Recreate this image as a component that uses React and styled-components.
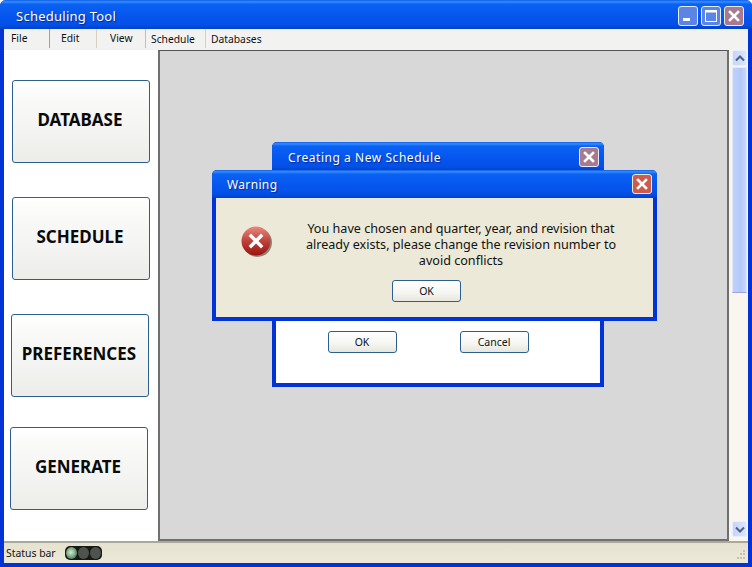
import React from "react";
import styled, { createGlobalStyle } from "styled-components";

const GlobalStyle = createGlobalStyle`
	html, body {
		margin: 0;
		padding: 0;
		background: #fff;
	}
	body {
		font-family: "Noto Sans", "Liberation Sans", sans-serif;
		color: #111;
	}
`;

const titleGradient = `linear-gradient(180deg, #0a5de8 0%, #3a8cfa 6%, #0a62f2 14%, #0556ee 55%, #0350e6 85%, #0240c8 100%)`;

const Window = styled.div`
	position: relative;
	width: 752px;
	height: 567px;
	display: flex;
	flex-direction: column;
	overflow: hidden;
	background: #0233d6;
	border-radius: 6px 6px 0 0;
`;

const TitleBar = styled.div`
	height: 29px;
	flex: none;
	display: flex;
	align-items: center;
	justify-content: space-between;
	padding: 0 8px 0 16px;
	background: ${titleGradient};
`;

const TitleText = styled.span`
	color: #fff;
	font-size: ${(p) => p.$size || 13}px;
	letter-spacing: ${(p) => p.$spacing || 0.25}px;
	padding-top: ${(p) => p.$top || 0}px;
	text-shadow: 1px 1px 1px #0a2a90;
`;

const WindowButtons = styled.div`
	display: flex;
	gap: 3px;
	margin-top: 2px;
`;

const CaptionButton = styled.div`
	width: 20px;
	height: 20px;
	box-sizing: border-box;
	border: 1px solid #e6ecff;
	border-radius: 3px;
	display: flex;
	align-items: center;
	justify-content: center;
	background: ${(p) => (p.$kind === "close" ? p.$bg || "#a87a90" : "#5a84e6")};
	flex: none;
`;

const Body = styled.div`
	flex: 1;
	margin: 0 4px;
	display: flex;
	flex-direction: column;
	min-height: 0;
`;

const MenuBar = styled.div`
	height: 21px;
	flex: none;
	display: flex;
	background: #f2f2f1;
	font-size: 10.3px;
`;

const MenuItem = styled.div`
	width: ${(p) => p.$width}px;
	box-sizing: border-box;
	padding-left: ${(p) => p.$pad}px;
	padding-top: ${(p) => p.$top}px;
	line-height: 14px;
	height: 19px;
	border-right: 1px solid ${(p) => p.$line || "#d8cfc0"};
	&:last-child {
		border-right: none;
	}
`;

const Content = styled.div`
	flex: 1;
	display: flex;
	min-height: 0;
	background: #fff;
`;

const Sidebar = styled.div`
	width: 154px;
	flex: none;
	padding-top: 30px;
	box-sizing: border-box;
	display: flex;
	flex-direction: column;
`;

const BigButton = styled.div`
	width: 138px;
	height: 83px;
	box-sizing: border-box;
	margin-left: ${(p) => p.$left}px;
	margin-bottom: ${(p) => p.$gap}px;
	padding: 0 2px 4px 0;
	border: 1px solid #2c5f8f;
	border-radius: 3px;
	background: linear-gradient(180deg, #fff 0%, #f8f8f6 30%, #f3f3f1 65%, #ecece8 100%);
	display: flex;
	align-items: center;
	justify-content: center;
	font-size: 17px;
	font-weight: 700;
	color: #0a0a0a;
`;

const MainPanel = styled.div`
	width: 571px;
	flex: none;
	box-sizing: border-box;
	background: #d8d8d8;
	border: 2px solid #6f6f6f;
	border-top-color: #555;
	border-top-width: 1px;
`;

const ScrollBar = styled.div`
	flex: 1;
	padding: 0 1px 0 3px;
	display: flex;
	flex-direction: column;
	background: #f8f6ef;
`;

const ScrollButton = styled.div`
	height: 16px;
	flex: none;
	border-radius: 2px;
	background: linear-gradient(90deg, #c5d5fb, #dbe5fd);
	border: 1px solid #e8eefe;
	box-sizing: border-box;
	display: flex;
	align-items: center;
	justify-content: center;
`;

const ScrollThumb = styled.div`
	height: 226px;
	flex: none;
	margin-top: 1px;
	box-sizing: border-box;
	background: linear-gradient(90deg, #c0d2fb, #b3c9fa 60%, #c8d7fc);
	border: 1px solid #dfe7fd;
	border-bottom: 1px solid #9aa6dc;
`;

const ScrollTrack = styled.div`
	flex: 1;
`;

const StatusBar = styled.div`
	height: 22px;
	flex: none;
	box-sizing: border-box;
	border-top: 2px solid #aca899;
	background: linear-gradient(180deg, #e6e2d0, #ece9d8);
	display: flex;
	align-items: center;
	padding-left: 2px;
	font-size: 10.4px;
	position: relative;
`;

const Lights = styled.div`
	margin-left: 9px;
	display: flex;
	gap: 1px;
	padding: 1px;
	background: #161a14;
	border-radius: 5px;
`;

const Light = styled.div`
	width: 11px;
	height: 12px;
	border-radius: 50%;
	background: ${(p) =>
		p.$on
			? "radial-gradient(circle at 45% 45%, #d5ecd8 0%, #6f9e78 55%, #2c4a32 100%)"
			: "#4e534e"};
`;

const Grip = styled.svg`
	position: absolute;
	right: 2px;
	bottom: 2px;
`;

const Bottom = styled.div`
	height: 4px;
	flex: none;
`;

const Dialog = styled.div`
	position: absolute;
	left: ${(p) => p.$x}px;
	top: ${(p) => p.$y}px;
	width: ${(p) => p.$w}px;
	height: ${(p) => p.$h}px;
	display: flex;
	flex-direction: column;
	background: #0233d6;
	border-radius: 5px 5px 0 0;
	overflow: hidden;
`;

const DialogTitle = styled.div`
	height: ${(p) => p.$h}px;
	flex: none;
	display: flex;
	align-items: center;
	justify-content: space-between;
	padding: 0 ${(p) => p.$right}px 0 ${(p) => p.$left}px;
	background: ${titleGradient};
`;

const DialogBody = styled.div`
	flex: 1;
	margin: 0 4px 4px;
	background: ${(p) => p.$bg};
	display: flex;
	flex-direction: column;
	align-items: center;
	min-height: 0;
`;

const ButtonRow = styled.div`
	display: flex;
	gap: 63px;
	margin-top: auto;
	margin-bottom: 30px;
	padding-right: 20px;
`;

const DialogButton = styled.div`
	width: 69px;
	height: 22px;
	box-sizing: border-box;
	border: 1px solid #2c5f8f;
	border-radius: 3px;
	background: linear-gradient(180deg, #fff 0%, #f5f5f1 60%, #e6e6de 100%);
	display: flex;
	align-items: center;
	justify-content: center;
	font-size: 10.5px;
	color: #111;
`;

const WarningRow = styled.div`
	width: 100%;
	display: flex;
	padding: 23px 0 0 25px;
	box-sizing: border-box;
`;

const WarningIcon = styled.svg`
	flex: none;
	margin-top: 5px;
`;

const Message = styled.div`
	width: 330px;
	margin-left: 23px;
	text-align: center;
	font-size: 12.6px;
	line-height: 16px;
	color: #111;
`;

const OkWrap = styled.div`
	margin-top: 11px;
	margin-right: 16px;
`;

const CloseIcon = () => (
	<svg width="12" height="12" viewBox="0 0 12 12">
		<path d="M2 2 L10 10 M10 2 L2 10" stroke="#fff" strokeWidth="2.6" strokeLinecap="square" />
	</svg>
);

const App = () => (
	<>
		<GlobalStyle />
		<Window>
			<TitleBar>
				<TitleText $top={2}>Scheduling Tool</TitleText>
				<WindowButtons>
					<CaptionButton>
						<svg width="14" height="14" viewBox="0 0 14 14">
							<rect x="2" y="9" width="7" height="3" fill="#fff" />
						</svg>
					</CaptionButton>
					<CaptionButton>
						<svg width="14" height="14" viewBox="0 0 14 14">
							<rect x="1.5" y="1.5" width="11" height="11" fill="none" stroke="#fff" />
							<rect x="1" y="1" width="12" height="2.5" fill="#fff" />
						</svg>
					</CaptionButton>
					<CaptionButton $kind="close">
						<CloseIcon />
					</CaptionButton>
				</WindowButtons>
			</TitleBar>
			<Body>
				<MenuBar>
					<MenuItem $width={46} $pad={7} $top={2} $line="#c98f80">File</MenuItem>
					<MenuItem $width={47} $pad={11} $top={2}>Edit</MenuItem>
					<MenuItem $width={49} $pad={13} $top={2} $line="#d4b8a0">View</MenuItem>
					<MenuItem $width={60} $pad={5} $top={3}>Schedule</MenuItem>
					<MenuItem $width={100} $pad={5} $top={3}>Databases</MenuItem>
				</MenuBar>
				<Content>
					<Sidebar>
						<BigButton $left={8} $gap={34}>DATABASE</BigButton>
						<BigButton $left={8} $gap={34}>SCHEDULE</BigButton>
						<BigButton $left={7} $gap={30}>PREFERENCES</BigButton>
						<BigButton $left={6} $gap={0}>GENERATE</BigButton>
					</Sidebar>
					<MainPanel />
					<ScrollBar>
						<ScrollButton>
							<svg width="10" height="7" viewBox="0 0 10 7">
								<path d="M1 5.5 L5 1.5 L9 5.5" fill="none" stroke="#4d6185" strokeWidth="2" />
							</svg>
						</ScrollButton>
						<ScrollThumb />
						<ScrollTrack />
						<ScrollButton>
							<svg width="10" height="7" viewBox="0 0 10 7">
								<path d="M1 1.5 L5 5.5 L9 1.5" fill="none" stroke="#4d6185" strokeWidth="2" />
							</svg>
						</ScrollButton>
						<Bottom />
					</ScrollBar>
				</Content>
				<StatusBar>
					Status bar
					<Lights>
						<Light $on />
						<Light />
						<Light />
					</Lights>
					<Grip width="12" height="12" viewBox="0 0 12 12">
						<g fill="#c5c1ae">
							<rect x="9" y="1" width="2" height="2" />
							<rect x="6" y="4" width="2" height="2" />
							<rect x="9" y="4" width="2" height="2" />
							<rect x="3" y="8" width="2" height="2" />
							<rect x="6" y="8" width="2" height="2" />
							<rect x="9" y="8" width="2" height="2" />
						</g>
					</Grip>
				</StatusBar>
			</Body>
			<Bottom />

			<Dialog $x={272} $y={142} $w={332} $h={245}>
				<DialogTitle $h={29} $left={16} $right={5}>
					<TitleText $size={12} $spacing={0.55} $top={2}>Creating a New Schedule</TitleText>
					<CaptionButton $kind="close">
						<CloseIcon />
					</CaptionButton>
				</DialogTitle>
				<DialogBody $bg="#fff">
					<ButtonRow>
						<DialogButton>OK</DialogButton>
						<DialogButton>Cancel</DialogButton>
					</ButtonRow>
				</DialogBody>
			</Dialog>

			<Dialog $x={212} $y={170} $w={445} $h={151}>
				<DialogTitle $h={28} $left={15} $right={5}>
					<TitleText $size={12} $spacing={0.35}>Warning</TitleText>
					<CaptionButton $kind="close" $bg="#d05a4a">
						<CloseIcon />
					</CaptionButton>
				</DialogTitle>
				<DialogBody $bg="#ece9d8">
					<WarningRow>
						<WarningIcon width="32" height="32" viewBox="0 0 32 32">
							<defs>
								<linearGradient id="warn" x1="0" y1="0" x2="0" y2="1">
									<stop offset="0" stopColor="#e88a80" />
									<stop offset="0.5" stopColor="#c0423a" />
									<stop offset="1" stopColor="#9c1210" />
								</linearGradient>
							</defs>
							<circle cx="16.5" cy="16.5" r="14.5" fill="#8a8878" />
							<circle cx="15" cy="15" r="14.5" fill="url(#warn)" />
							<path d="M10 10 L20 20 M20 10 L10 20" stroke="#fff" strokeWidth="3.4" strokeLinecap="square" />
						</WarningIcon>
						<Message>
							You have chosen and quarter, year, and revision that already exists, please change the revision number to avoid conflicts
						</Message>
					</WarningRow>
					<OkWrap>
						<DialogButton>OK</DialogButton>
					</OkWrap>
				</DialogBody>
			</Dialog>
		</Window>
	</>
);

export default App;
